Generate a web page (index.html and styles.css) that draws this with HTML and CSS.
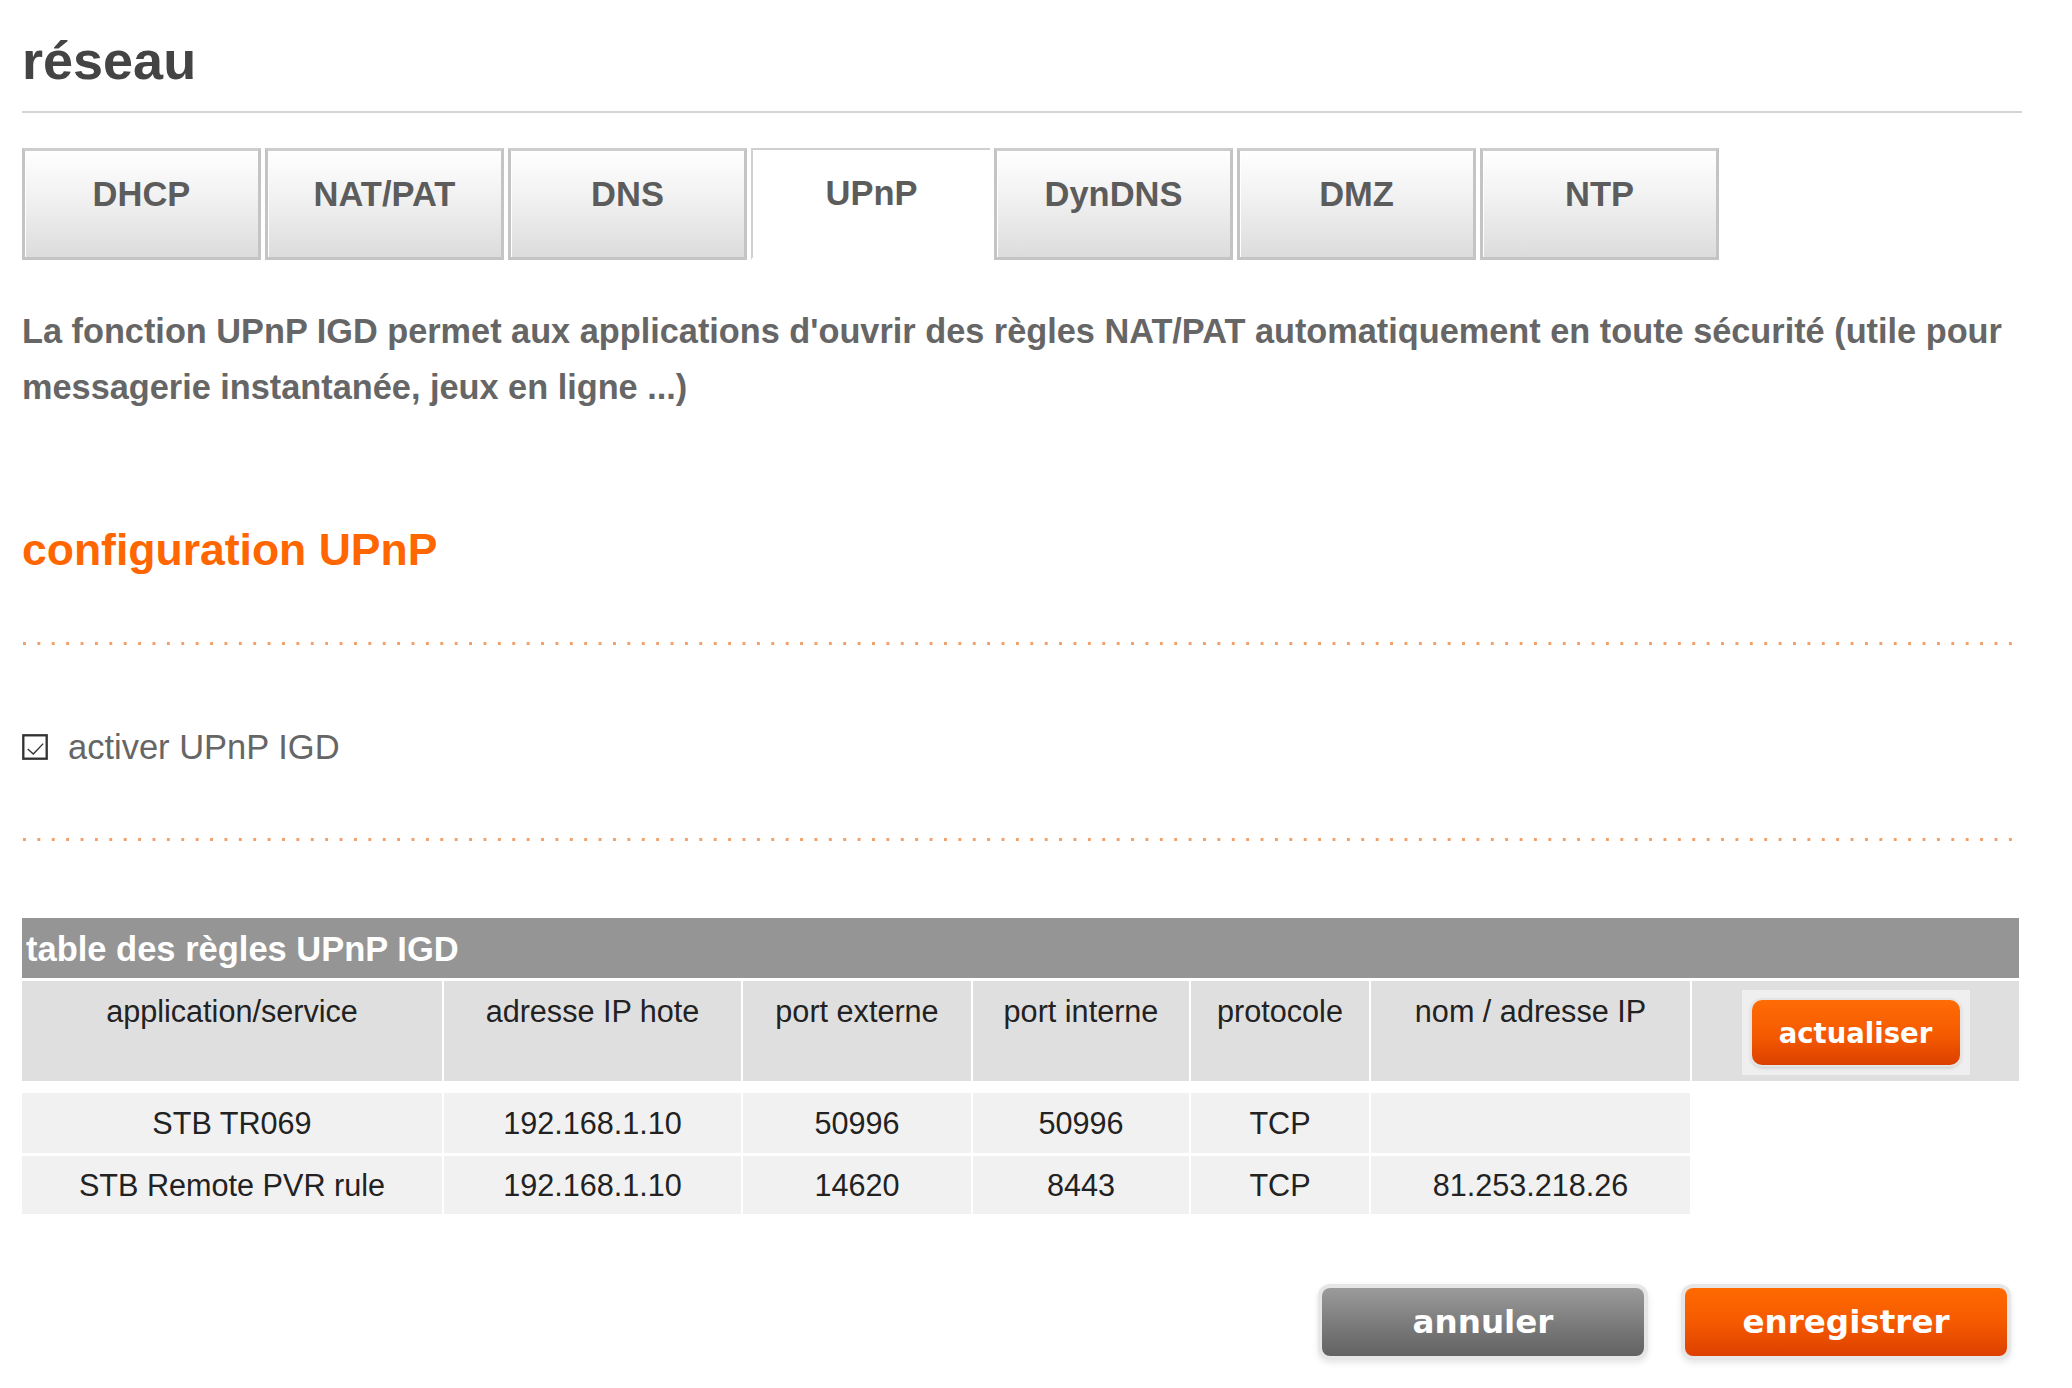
FILE: index.html
```html
<!DOCTYPE html>
<html lang="fr">
<head>
    <meta charset="UTF-8">
    <title>réseau - UPnP</title>
    <link rel="stylesheet" href="styles.css">
</head>
<body>
    <div class="page">
        <h1 class="page-title">réseau</h1>

        <!-- onglets -->
        <ul class="tabs">
            <li class="tab">DHCP</li>
            <li class="tab">NAT/PAT</li>
            <li class="tab">DNS</li>
            <li class="tab active">UPnP</li>
            <li class="tab">DynDNS</li>
            <li class="tab">DMZ</li>
            <li class="tab">NTP</li>
        </ul>

        <p class="intro">La fonction UPnP IGD permet aux applications d'ouvrir des règles NAT/PAT automatiquement en toute sécurité (utile pour messagerie instantanée, jeux en ligne ...)</p>

        <h2 class="section-title">configuration UPnP</h2>

        <div class="dots"></div>

        <label class="check-row">
            <span class="check-box">
                <svg width="26" height="26" viewBox="0 0 20 20">
                    <rect x="1" y="1" width="18" height="18" fill="#fff" stroke="#333" stroke-width="1.8"/>
                    <polyline points="4.4,11.6 8.7,15.4 16.3,7.4" fill="none" stroke="#333" stroke-width="1.1"/>
                </svg>
            </span>
            activer UPnP IGD
        </label>

        <div class="dots"></div>

        <!-- table des règles -->
        <table class="rules">
            <colgroup>
                <col style="width:420px">
                <col style="width:299px">
                <col style="width:230px">
                <col style="width:218px">
                <col style="width:180px">
                <col style="width:321px">
                <col style="width:329px">
            </colgroup>
            <tr>
                <th colspan="7" class="rules-title">table des règles UPnP IGD</th>
            </tr>
            <tr class="rules-head">
                <th>application/service</th>
                <th>adresse IP hote</th>
                <th>port externe</th>
                <th>port interne</th>
                <th>protocole</th>
                <th>nom / adresse IP</th>
                <th class="refresh-cell">
                    <span class="refresh-wrap"><button class="btn-refresh">actualiser</button></span>
                </th>
            </tr>
            <tr class="rule first">
                <td>STB TR069</td>
                <td>192.168.1.10</td>
                <td>50996</td>
                <td>50996</td>
                <td>TCP</td>
                <td></td>
                <td class="blank"></td>
            </tr>
            <tr class="rule">
                <td>STB Remote PVR rule</td>
                <td>192.168.1.10</td>
                <td>14620</td>
                <td>8443</td>
                <td>TCP</td>
                <td>81.253.218.26</td>
                <td class="blank"></td>
            </tr>
        </table>

        <div class="actions">
            <button class="btn btn-grey">annuler</button>
            <button class="btn btn-orange">enregistrer</button>
        </div>
    </div>
</body>
</html>
```

FILE: styles.css
```css
body {
    margin: 0;
    background-color: #fff;
    font-family: "Liberation Sans", Arial, sans-serif;
}

.page {
    padding: 29px 50px 40px 22px;
}

.page-title {
    margin: 0;
    font-size: 54px;
    line-height: 63px;
    font-weight: bold;
    color: #444;
    padding-bottom: 19px;
    border-bottom: 2px solid #d4d4d4;
}

/* onglets */
.tabs {
    list-style: none;
    margin: 35px 0 0 0;
    padding: 0;
    display: flex;
    gap: 4px;
}

.tab {
    box-sizing: border-box;
    width: 239px;
    height: 112px;
    padding-top: 23px;
    text-align: center;
    font-size: 34.5px;
    line-height: 40px;
    font-weight: bold;
    color: #5c5c5c;
    border: 3px solid #c4c4c4;
    border-top-color: #cdcdcd;
    background: linear-gradient(#ffffff, #f1f1f1 45%, #dcdcdc);
    box-shadow: inset 1px 1px 0 #fff;
}

.tab.active {
    background: #fff;
    border-color: #cfcfcf;
    border-bottom-color: #fff;
    border-right-width: 0;
    border-top-width: 2px;
    border-left-width: 2px;
    box-shadow: none;
}

.intro {
    margin: 44px 0 0 0;
    font-size: 34.3px;
    line-height: 55.5px;
    font-weight: bold;
    color: #666;
}

.section-title {
    margin: 109px 0 0 0;
    font-size: 44.5px;
    line-height: 52px;
    font-weight: bold;
    color: #ff6600;
}

/* ligne en pointillés */
.dots {
    height: 3px;
    margin: 66px 6px 0 1px;
    background-image: linear-gradient(to right, #f2a068 3px, transparent 3px);
    background-size: 14.4px 3px;
    background-repeat: repeat-x;
}

.check-row {
    display: flex;
    align-items: center;
    margin-top: 82px;
    height: 40px;
    font-size: 34.5px;
    line-height: 40px;
    color: #666;
}

.check-row + .dots {
    margin-top: 71px;
}

.check-box {
    display: flex;
    margin-right: 20px;
}

/* table des règles */
.rules {
    margin-top: 77px;
    width: 1997px;
    table-layout: fixed;
    border-collapse: separate;
    border-spacing: 0;
}

.rules-title {
    height: 60px;
    padding: 2px 0 0 4px;
    background-color: #959595;
    color: #fff;
    text-align: left;
    font-size: 34.5px;
    line-height: 58px;
    font-weight: bold;
    box-sizing: border-box;
}

.rules-head th {
    height: 103px;
    box-sizing: border-box;
    padding: 12px 6px 0 6px;
    vertical-align: top;
    background-color: #e0dfdf;
    border-top: 3px solid #fff;
    border-left: 2px solid #fff;
    font-size: 30.6px;
    line-height: 36px;
    font-weight: normal;
    color: #222;
}

.rules-head th:first-child {
    border-left: none;
}

.rules-head .refresh-cell {
    vertical-align: middle;
    padding-top: 3px;
}

.refresh-wrap {
    display: inline-block;
    padding: 10px;
    background-color: #efefef;
}

.btn-refresh {
    display: block;
    width: 208px;
    height: 65px;
    border: none;
    border-radius: 10px;
    background: linear-gradient(#ff6c05, #f45a00 55%, #dc4000);
    box-shadow: 0 0 0 2px #e4e4e4, 0 2px 4px rgba(0, 0, 0, 0.25);
    color: #fff;
    font-family: "DejaVu Sans", Verdana, sans-serif;
    font-size: 27.5px;
    font-weight: bold;
    cursor: pointer;
}

.rule td {
    height: 61px;
    box-sizing: border-box;
    text-align: center;
    vertical-align: middle;
    background-color: #f2f1f1;
    border-top: 3px solid #fff;
    border-left: 2px solid #fff;
    font-size: 30.6px;
    color: #222;
}

.rule.first td {
    border-top-width: 12px;
    height: 72px;
}

.rule td:first-child {
    border-left: none;
}

.rule td.blank {
    background-color: #fff;
}

/* boutons du bas */
.actions {
    display: flex;
    justify-content: flex-end;
    gap: 41px;
    margin-top: 74px;
    padding-right: 15px;
}

.btn {
    width: 322px;
    height: 68px;
    border: none;
    border-radius: 8px;
    color: #fff;
    font-family: "DejaVu Sans", Verdana, sans-serif;
    font-size: 32.6px;
    font-weight: bold;
    cursor: pointer;
    box-shadow: 0 0 0 4px #e6e6e6, 0 3px 6px 4px rgba(0, 0, 0, 0.1);
}

.btn-grey {
    background: linear-gradient(#9b9b9b, #7d7d7d 50%, #626262);
}

.btn-orange {
    background: linear-gradient(#ff6a00, #f55a00 50%, #dd4000);
}
```
